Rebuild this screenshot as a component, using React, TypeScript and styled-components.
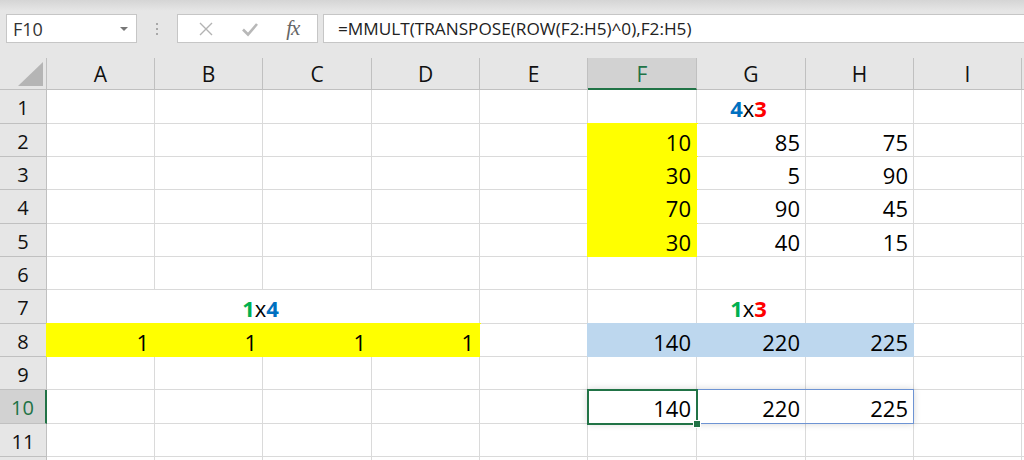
import React from "react";
import styled, { createGlobalStyle } from "styled-components";

const palette = {
  chrome: "#e6e6e6",
  chromeTop: "#d5d5d5",
  boxBorder: "#c6c6c6",
  grid: "#dadada",
  header: "#e6e6e6",
  headerActive: "#d2d2d2",
  headerLine: "#c0c0c0",
  green: "#217346",
  yellow: "#ffff00",
  blue: "#bdd7ee",
  spill: "#6d93d3",
  blueText: "#0070c0",
  redText: "#ff0000",
  greenText: "#00b050",
};

const GlobalStyle = createGlobalStyle`
  html, body {
    margin: 0;
    padding: 0;
    background: #fff;
    overflow: hidden;
  }
  body {
    font-family: "Open Sans", "Liberation Sans", sans-serif;
  }
`;

// J and row 12 are only slivers at the window edge, so their labels stay empty
const COLS = ["A", "B", "C", "D", "E", "F", "G", "H", "I", "J"];
const COL_WIDTHS = [108, 108, 109, 108, 108, 109, 109, 108, 108, 60];
const ROW_HEIGHTS = [34, 33, 33, 34, 33, 33, 34, 33, 33, 34, 33, 33];
const VISIBLE_COLS = 9;
const VISIBLE_ROWS = 11;
const ACTIVE_COL = "F";
const ACTIVE_ROW = 10;

/* ---------- formula bar ---------- */

const Toolbar = styled.div`
  height: 58px;
  display: flex;
  align-items: flex-start;
  padding: 14px 0 0 6px;
  box-sizing: border-box;
  background: linear-gradient(${palette.chromeTop}, ${palette.chrome} 11px);
`;

const NameBox = styled.div`
  width: 131px;
  height: 29px;
  box-sizing: border-box;
  display: flex;
  align-items: center;
  justify-content: space-between;
  padding: 0 8px 0 6px;
  background: #fff;
  border: 1px solid ${palette.boxBorder};
  font-size: 18px;
  color: #333;
`;

const DropArrow = styled.span`
  width: 0;
  height: 0;
  border-left: 4px solid transparent;
  border-right: 4px solid transparent;
  border-top: 4px solid #777;
`;

const Grip = styled.div`
  width: 40px;
  height: 29px;
  display: flex;
  flex-direction: column;
  align-items: center;
  justify-content: center;
  gap: 3px;
`;

const GripDot = styled.span`
  width: 2px;
  height: 2px;
  background: #a8a8a8;
`;

const FunctionBox = styled.div`
  width: 141px;
  height: 29px;
  box-sizing: border-box;
  display: flex;
  align-items: center;
  justify-content: space-around;
  padding: 0 4px 0 6px;
  background: #fff;
  border: 1px solid ${palette.boxBorder};
`;

const FxLabel = styled.span`
  font-family: "Liberation Serif", "DejaVu Serif", serif;
  font-style: italic;
  font-size: 21px;
  color: #666;
  letter-spacing: -1px;
`;

const FormulaBox = styled.div`
  flex: 1;
  height: 29px;
  margin-left: 5px;
  margin-right: -4px;
  box-sizing: border-box;
  display: flex;
  align-items: center;
  padding-left: 14px;
  background: #fff;
  border: 1px solid ${palette.boxBorder};
  font-size: 17.2px;
  color: #222;
  white-space: nowrap;
`;

/* ---------- sheet ---------- */

const Sheet = styled.div`
  display: grid;
  grid-template-columns: 47px ${COL_WIDTHS.map((w) => `${w}px`).join(" ")};
  grid-template-rows: 32px ${ROW_HEIGHTS.map((h) => `${h}px`).join(" ")};
  background: #fff;
  font-size: 22px;
  color: #000;
`;

const Corner = styled.div`
  grid-row: 1;
  grid-column: 1;
  display: flex;
  align-items: flex-end;
  justify-content: flex-end;
  padding: 0 3px 3px 0;
  background: ${palette.header};
  border-right: 1px solid ${palette.headerLine};
  border-bottom: 1px solid ${palette.headerLine};
`;

const CornerTriangle = styled.div`
  width: 25px;
  height: 24px;
  background: #b5b5b5;
  clip-path: polygon(100% 0, 100% 100%, 0 100%);
`;

const ColHeader = styled.div<{ $col: number; $active?: boolean }>`
  grid-row: 1;
  grid-column: ${(p) => p.$col};
  display: flex;
  align-items: center;
  justify-content: center;
  padding-top: 1px;
  background: ${(p) => (p.$active ? palette.headerActive : palette.header)};
  color: ${(p) => (p.$active ? palette.green : "#111")};
  border-right: 1px solid ${palette.headerLine};
  border-bottom: ${(p) =>
    p.$active ? `2px solid ${palette.green}` : `1px solid ${palette.headerLine}`};
  font-size: 21px;
`;

const RowHeader = styled.div<{ $row: number; $active?: boolean }>`
  grid-row: ${(p) => p.$row};
  grid-column: 1;
  display: flex;
  align-items: center;
  justify-content: center;
  padding-top: 2px;
  background: ${(p) => (p.$active ? palette.headerActive : palette.header)};
  color: ${(p) => (p.$active ? palette.green : "#111")};
  border-right: ${(p) =>
    p.$active ? `2px solid ${palette.green}` : `1px solid ${palette.headerLine}`};
  border-bottom: 1px solid ${palette.headerLine};
  font-size: 20px;
`;

const Cell = styled.div<{
  $row: number;
  $col: number;
  $span?: number;
  $fill?: string;
  $center?: boolean;
}>`
  grid-row: ${(p) => p.$row};
  grid-column: ${(p) => p.$col} / span ${(p) => p.$span ?? 1};
  display: flex;
  align-items: center;
  justify-content: ${(p) => (p.$center ? "center" : "flex-end")};
  padding: 3px 5px 0 0;
  overflow: hidden;
  white-space: nowrap;
  background: ${(p) => p.$fill ?? "#fff"};
  border-right: 1px solid ${(p) => p.$fill ?? palette.grid};
  border-bottom: 1px solid ${(p) => p.$fill ?? palette.grid};
  box-shadow: ${(p) => (p.$fill ? `0 0 0 1px ${p.$fill}` : "none")};
`;

const Strong = styled.b<{ $color: string }>`
  color: ${(p) => p.$color};
  font-weight: 700;
`;

const SpillRange = styled.div<{ $row: number; $from: number; $to: number }>`
  grid-row: ${(p) => p.$row};
  grid-column: ${(p) => p.$from} / ${(p) => p.$to};
  margin: -1px 0 0 -1px;
  border: 1px solid ${palette.spill};
  box-shadow: 0 0 7px rgba(0, 0, 0, 0.16);
  pointer-events: none;
`;

const ActiveCell = styled.div<{ $row: number; $col: number }>`
  grid-row: ${(p) => p.$row};
  grid-column: ${(p) => p.$col};
  position: relative;
  margin: -1px;
  border: 2px solid ${palette.green};
  pointer-events: none;
`;

const FillHandle = styled.span`
  position: absolute;
  right: -5px;
  bottom: -5px;
  width: 6px;
  height: 6px;
  background: ${palette.green};
  border: 1px solid #fff;
`;

type CellData = {
  value?: React.ReactNode;
  fill?: string;
  center?: boolean;
  span?: number;
};

const dims = (a: string, b: string) => (
  <span>
    <Strong $color={a === "1" ? palette.greenText : palette.blueText}>{a}</Strong>
    x
    <Strong $color={b === "3" ? palette.redText : palette.blueText}>{b}</Strong>
  </span>
);

const cells: Record<string, CellData> = {
  G1: { value: dims("4", "3"), center: true },
  F2: { value: 10, fill: palette.yellow },
  G2: { value: 85 },
  H2: { value: 75 },
  F3: { value: 30, fill: palette.yellow },
  G3: { value: 5 },
  H3: { value: 90 },
  F4: { value: 70, fill: palette.yellow },
  G4: { value: 90 },
  H4: { value: 45 },
  F5: { value: 30, fill: palette.yellow },
  G5: { value: 40 },
  H5: { value: 15 },
  A7: { value: dims("1", "4"), center: true, span: 4 },
  G7: { value: dims("1", "3"), center: true },
  A8: { value: 1, fill: palette.yellow },
  B8: { value: 1, fill: palette.yellow },
  C8: { value: 1, fill: palette.yellow },
  D8: { value: 1, fill: palette.yellow },
  F8: { value: 140, fill: palette.blue },
  G8: { value: 220, fill: palette.blue },
  H8: { value: 225, fill: palette.blue },
  F10: { value: 140 },
  G10: { value: 220 },
  H10: { value: 225 },
};

const merged = new Set(["B7", "C7", "D7"]);

const CancelIcon = () => (
  <svg width="16" height="16" viewBox="0 0 16 16">
    <path d="M2 2 L14 14 M14 2 L2 14" stroke="#b3b3b3" strokeWidth="1.4" fill="none" />
  </svg>
);

const EnterIcon = () => (
  <svg width="18" height="16" viewBox="0 0 18 16">
    <path d="M2 8.5 L7 13.5 L16 3" stroke="#b8b8b8" strokeWidth="2.6" fill="none" />
  </svg>
);

const FormulaBar: React.FC = () => (
  <Toolbar>
    <NameBox>
      F10
      <DropArrow />
    </NameBox>
    <Grip>
      <GripDot />
      <GripDot />
      <GripDot />
    </Grip>
    <FunctionBox>
      <CancelIcon />
      <EnterIcon />
      <FxLabel>fx</FxLabel>
    </FunctionBox>
    <FormulaBox>=MMULT(TRANSPOSE(ROW(F2:H5)^0),F2:H5)</FormulaBox>
  </Toolbar>
);

const App: React.FC = () => {
  const activeCol = COLS.indexOf(ACTIVE_COL) + 2;
  const activeRow = ACTIVE_ROW + 1;

  return (
    <>
      <GlobalStyle />
      <FormulaBar />
      <Sheet>
        <Corner>
          <CornerTriangle />
        </Corner>
        {COLS.map((c, i) => (
          <ColHeader key={c} $col={i + 2} $active={c === ACTIVE_COL}>
            {i < VISIBLE_COLS ? c : ""}
          </ColHeader>
        ))}
        {ROW_HEIGHTS.map((_, r) => {
          const rowNum = r + 1;
          return (
            <React.Fragment key={rowNum}>
              <RowHeader $row={rowNum + 1} $active={rowNum === ACTIVE_ROW}>
                {rowNum <= VISIBLE_ROWS ? rowNum : ""}
              </RowHeader>
              {COLS.map((c, i) => {
                const key = `${c}${rowNum}`;
                if (merged.has(key)) return null;
                const data = cells[key] ?? {};
                return (
                  <Cell
                    key={key}
                    $row={rowNum + 1}
                    $col={i + 2}
                    $span={data.span}
                    $fill={data.fill}
                    $center={data.center}
                  >
                    {data.value}
                  </Cell>
                );
              })}
            </React.Fragment>
          );
        })}
        <SpillRange $row={activeRow} $from={activeCol} $to={activeCol + 3} />
        <ActiveCell $row={activeRow} $col={activeCol}>
          <FillHandle />
        </ActiveCell>
      </Sheet>
    </>
  );
};

export default App;
